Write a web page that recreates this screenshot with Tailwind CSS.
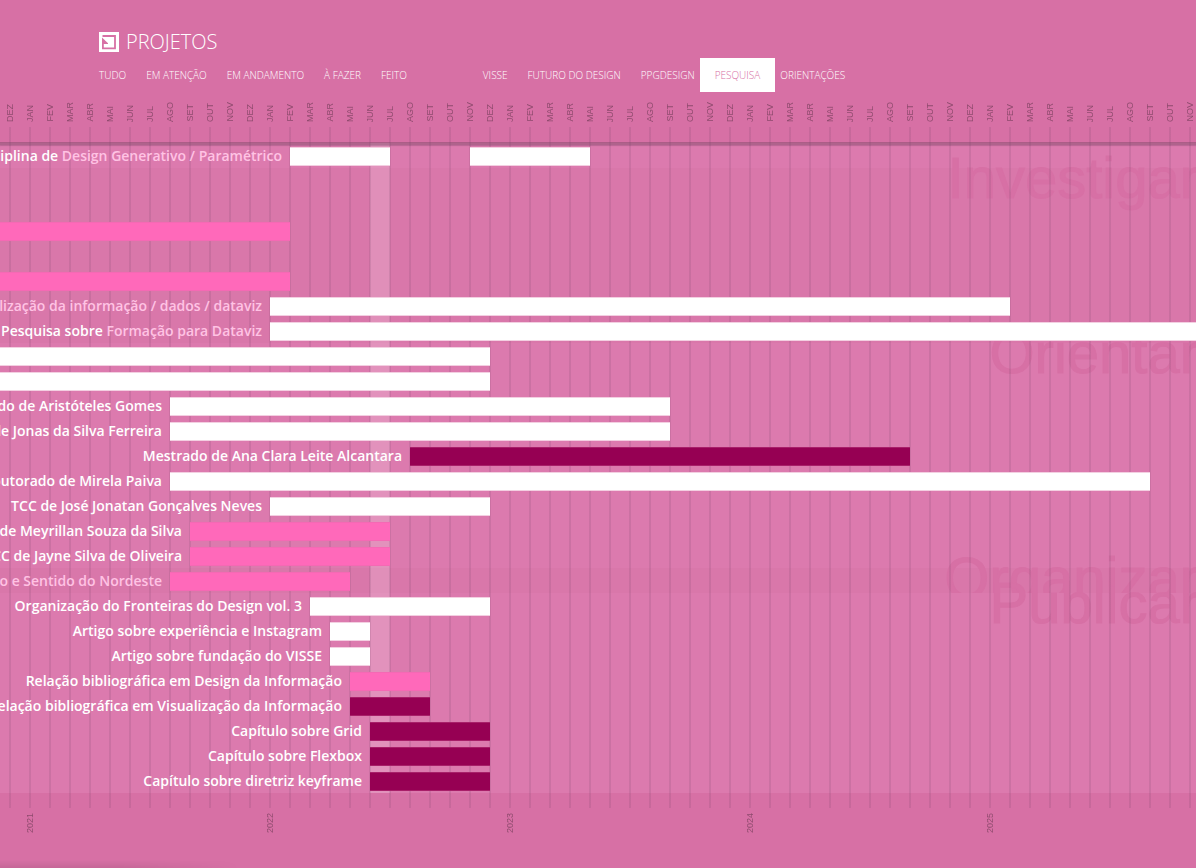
<!DOCTYPE html>
<html lang="pt-BR">
<head>
<meta charset="utf-8">
<title>Projetos</title>
<script src="https://cdn.jsdelivr.net/npm/@tailwindcss/browser@4"></script>
</head>
<body class="min-h-screen overflow-x-hidden bg-[#d770a5] font-['Open_Sans',sans-serif] text-white relative">
<header class="pt-[30px] pl-[99px]">
  <h1 class="flex items-center gap-[7px] text-[20px] leading-6 font-light">
    <svg class="size-5" viewBox="0 0 20 20" aria-hidden="true">
      <path fill="#fff" d="M0 0h20v20H0z"/>
      <path fill="none" stroke="#d770a5" stroke-width="1.8" d="M3.500 4h12.500v12.300H3.900V8"/>
      <path fill="#d770a5" d="M3 5.500L9 11.200V12H3z"/>
      <path fill="#fff" d="M5 5h4v5z"/>
    </svg>
    PROJETOS
  </h1>
  <nav class="mt-1 flex h-[34px] items-center gap-5 text-[10px] leading-4 font-light whitespace-nowrap">
    <a href="#">TUDO</a>
    <a href="#">EM ATENÇÃO</a>
    <a href="#">EM ANDAMENTO</a>
    <a href="#">À FAZER</a>
    <a href="#">FEITO</a>
    <a href="#" class="ml-14">VISSE</a>
    <a href="#">FUTURO DO DESIGN</a>
    <a href="#">PPGDESIGN</a>
    <a href="#" class="-mx-[15px] flex h-full items-center bg-white px-[15px] text-[#d770a5]">PESQUISA</a>
    <a href="#">ORIENTAÇÕES</a>
  </nav>
</header>

<div id="months" class="flex h-[30px] items-end overflow-hidden font-['Liberation_Sans',sans-serif] text-[9px] leading-5 text-black/35"></div>

<main class="relative mt-[5px] overflow-hidden pt-4 pb-[15px]">
  <div id="sections"></div>
  <div class="absolute top-4 bottom-[15px] left-[370px] w-5 bg-white/18"></div>
  <div class="absolute inset-0 bg-[repeating-linear-gradient(90deg,transparent_0_9px,rgba(80,50,80,0.12)_9px_11px,transparent_11px_20px)]"></div>
  <div class="absolute inset-x-0 top-[15px] h-[3px] bg-[#784664]/45 shadow-[0_1px_1px_rgba(80,40,70,0.25)]"></div>
</main>

<div id="years" class="flex h-[30px] pt-[5px] pl-5 font-['Liberation_Sans',sans-serif] text-[9px] leading-5 text-black/35"></div>
<div class="absolute bottom-0 left-0 h-2 w-60 bg-linear-to-t from-black/8 to-transparent mask-r-from-50%"></div>

<script>
// Chart origin is 1 Dec 2020 at x = 10; each month is 20px wide.
const names = ['DEZ','JAN','FEV','MAR','ABR','MAI','JUN','JUL','AGO','SET','OUT','NOV'];
document.getElementById('months').innerHTML = Array.from({length: 60}, (_, i) =>
  `<span class="w-5 shrink-0 rotate-180 [writing-mode:vertical-rl]">${names[i % 12]}</span>`).join('');
document.getElementById('years').innerHTML = [2021, 2022, 2023, 2024, 2025].map(y =>
  `<span class="mr-[220px] w-5 shrink-0 rotate-180 self-start [writing-mode:vertical-rl]">${y}</span>`).join('');

const tone = {
  w: 'bg-white border-[#f3cfe1]',
  p: 'bg-[#ff69ba] border-[#f569b4]',
  d: 'bg-[#960053] border-[#a81f69]'
};
// Row: label, highlighted part of the label, then bars as [start, end, tone].
const sections = [
  {name: '', bg: 'bg-[#dc7aae]', rows: [
    ['Disciplina de ', 'Design Generativo / Paramétrico', [290,390,'w'], [470,590,'w']]]},
  {name: 'Investigar', bg: 'bg-[#d977aa]', rows: [
    ['',''], ['',''], ['','',[0,290,'p']], ['',''], ['','',[0,290,'p']],
    ['Pesquisa sobre ','Visualização da informação / dados / dataviz',[270,1010,'w']],
    ['Pesquisa sobre ','Formação para Dataviz',[270,1300,'w']]]},
  {name: 'Orientar', bg: 'bg-[#dc7aae]', rows: [
    ['','',[0,490,'w']], ['','',[0,490,'w']],
    ['Doutorado de Aristóteles Gomes','',[170,670,'w']],
    ['Doutorado de Jonas da Silva Ferreira','',[170,670,'w']],
    ['Mestrado de Ana Clara Leite Alcantara','',[410,910,'d']],
    ['Doutorado de Mirela Paiva','',[170,1150,'w']],
    ['TCC de José Jonatan Gonçalves Neves','',[270,490,'w']],
    ['TCC de Meyrillan Souza da Silva','',[190,390,'p']],
    ['TCC de Jayne Silva de Oliveira','',[190,390,'p']]]},
  {name: 'Organizar', bg: 'bg-[#d977aa]', rows: [
    ['','Sentido e Sentido do Nordeste',[170,350,'p']]]},
  {name: 'Publicar', bg: 'bg-[#dc7aae]', rows: [
    ['Organização do Fronteiras do Design vol. 3','',[310,490,'w']],
    ['Artigo sobre experiência e Instagram','',[330,370,'w']],
    ['Artigo sobre fundação do VISSE','',[330,370,'w']],
    ['Relação bibliográfica em Design da Informação','',[350,430,'p']],
    ['Relação bibliográfica em Visualização da Informação','',[350,430,'d']],
    ['Capítulo sobre Grid','',[370,490,'d']],
    ['Capítulo sobre Flexbox','',[370,490,'d']],
    ['Capítulo sobre diretriz keyframe','',[370,490,'d']]]}
];
document.getElementById('sections').innerHTML = sections.map(s => `
  <section class="relative ${s.bg}">
    <h2 class="absolute -top-[19px] -right-[3px] font-['Liberation_Sans',sans-serif] text-[58px] leading-none text-[#d770a5] [-webkit-text-stroke:1px_#d770a5]">${s.name}</h2>
    ${s.rows.map(([a, b, ...bars]) => {
      let x = bars.length ? bars[0][0] : 0;
      return `<div class="relative z-10 flex h-[25px] pt-1">
        <div class="flex shrink-0 justify-end text-[14px] leading-[17px] font-semibold whitespace-nowrap" style="width:${x}px">${a || b ? `<p class="pr-2">${a}<span class="text-[#ffc3e4]">${b}</span></p>` : ''}</div>
        ${bars.map(([f, t, c]) => {
          const gap = f - x; x = t;
          return `<div class="h-[19px] shrink-0 border-y ${tone[c]}" style="width:${t - f}px;margin-left:${gap}px"></div>`;
        }).join('')}
      </div>`;
    }).join('')}
  </section>`).join('');
</script>
</body>
</html>
